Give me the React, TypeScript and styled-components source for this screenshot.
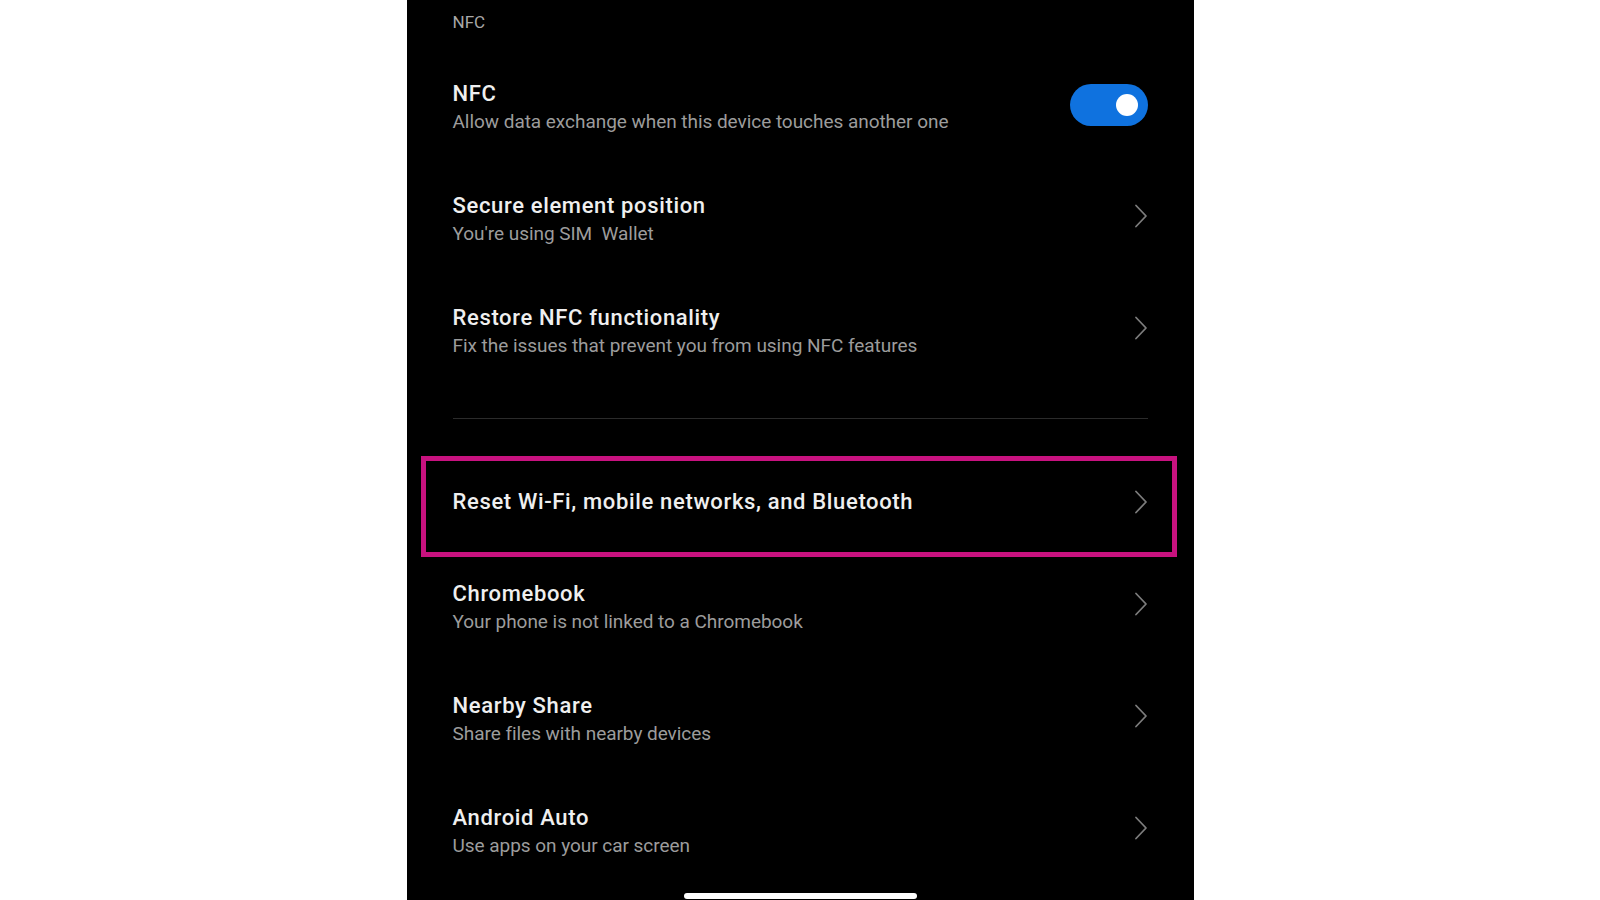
import React from "react";
import styled, { createGlobalStyle } from "styled-components";

const Global = createGlobalStyle`
  html, body { margin: 0; padding: 0; background: #ffffff; }
  body { font-family: Roboto, "Noto Sans", Arial, sans-serif; }
`;

const Page = styled.div`
  width: 1600px;
  height: 900px;
  display: flex;
  justify-content: center;
  overflow: hidden;
`;

const Phone = styled.div`
  width: 787px;
  height: 900px;
  background: #000000;
  padding: 0 46px;
  box-sizing: border-box;
  display: flex;
  flex-direction: column;
  overflow: hidden;
`;

const SectionHeader = styled.div`
  height: 51px;
  box-sizing: border-box;
  padding-top: 12px;
  font-size: 17px;
  line-height: 20px;
  color: #a8a8a8;
`;

const Row = styled.div<{ $h?: number }>`
  position: relative;
  height: ${(p) => p.$h ?? 112}px;
  display: flex;
  align-items: center;
  justify-content: space-between;
`;

const TextBlock = styled.div`
  display: flex;
  flex-direction: column;
`;

const Title = styled.div`
  font-size: 22px;
  line-height: 28px;
  font-weight: 500;
  letter-spacing: 0.65px;
  color: #efefef;
`;

const Subtitle = styled.div`
  font-size: 19px;
  line-height: 27px;
  letter-spacing: -0.04px;
  color: #9c9c9c;
`;

const Toggle = styled.div<{ $on: boolean }>`
  width: 78px;
  height: 42px;
  border-radius: 21px;
  background: ${(p) => (p.$on ? "#0f72df" : "#444")};
  display: flex;
  align-items: center;
  justify-content: ${(p) => (p.$on ? "flex-end" : "flex-start")};
  padding: 0 10px;
  box-sizing: border-box;
  margin-bottom: 5px;
`;

const Knob = styled.div`
  width: 22px;
  height: 22px;
  border-radius: 50%;
  background: #ffffff;
`;

const DividerBlock = styled.div`
  height: 66px;
  box-sizing: border-box;
  padding-top: 31px;
`;

const Line = styled.div`
  height: 1px;
  background: #2b2b2b;
`;

const Highlight = styled.div`
  position: absolute;
  top: 3px;
  bottom: -6px;
  left: -32px;
  right: -29px;
  border: 5px solid #c8127f;
  pointer-events: none;
`;

const HomeBarWrap = styled.div`
  padding-top: 6px;
  display: flex;
  justify-content: center;
`;

const HomeBar = styled.div`
  width: 233px;
  height: 6px;
  border-radius: 3px;
  background: #ffffff;
`;

const ChevronBox = styled.div<{ $lift: number }>`
  display: flex;
  margin-bottom: ${(p) => p.$lift}px;
`;

const Chevron = ({ lift = 0 }: { lift?: number }) => (
  <ChevronBox $lift={lift}>
    <svg width="14" height="24" viewBox="0 0 14 24" fill="none">
      <polyline
        points="2,1.5 12,12 2,22.5"
        stroke="#7c7c7c"
        strokeWidth="1.8"
        strokeLinecap="round"
        strokeLinejoin="round"
      />
    </svg>
  </ChevronBox>
);

type Item = { title: string; sub?: string };

const NavRow = ({ title, sub }: Item) => (
  <Row>
    <TextBlock>
      <Title>{title}</Title>
      {sub && <Subtitle>{sub}</Subtitle>}
    </TextBlock>
    <Chevron lift={6} />
  </Row>
);

const top: Item[] = [
  { title: "Secure element position", sub: "You're using SIM\u00a0\u00a0Wallet" },
  { title: "Restore NFC functionality", sub: "Fix the issues that prevent you from using NFC features" },
];

const bottom: Item[] = [
  { title: "Chromebook", sub: "Your phone is not linked to a Chromebook" },
  { title: "Nearby Share", sub: "Share files with nearby devices" },
  { title: "Android Auto", sub: "Use apps on your car screen" },
];

export default function App() {
  return (
    <>
      <Global />
      <Page>
        <Phone>
          <SectionHeader>NFC</SectionHeader>
          <Row>
            <TextBlock>
              <Title>NFC</Title>
              <Subtitle>Allow data exchange when this device touches another one</Subtitle>
            </TextBlock>
            <Toggle $on>
              <Knob />
            </Toggle>
          </Row>
          {top.map((it) => (
            <NavRow key={it.title} {...it} />
          ))}
          <DividerBlock>
            <Line />
          </DividerBlock>
          <Row $h={98}>
            <Title>Reset Wi-Fi, mobile networks, and Bluetooth</Title>
            <Chevron />
            <Highlight />
          </Row>
          {bottom.map((it) => (
            <NavRow key={it.title} {...it} />
          ))}
          <HomeBarWrap>
            <HomeBar />
          </HomeBarWrap>
        </Phone>
      </Page>
    </>
  );
}
